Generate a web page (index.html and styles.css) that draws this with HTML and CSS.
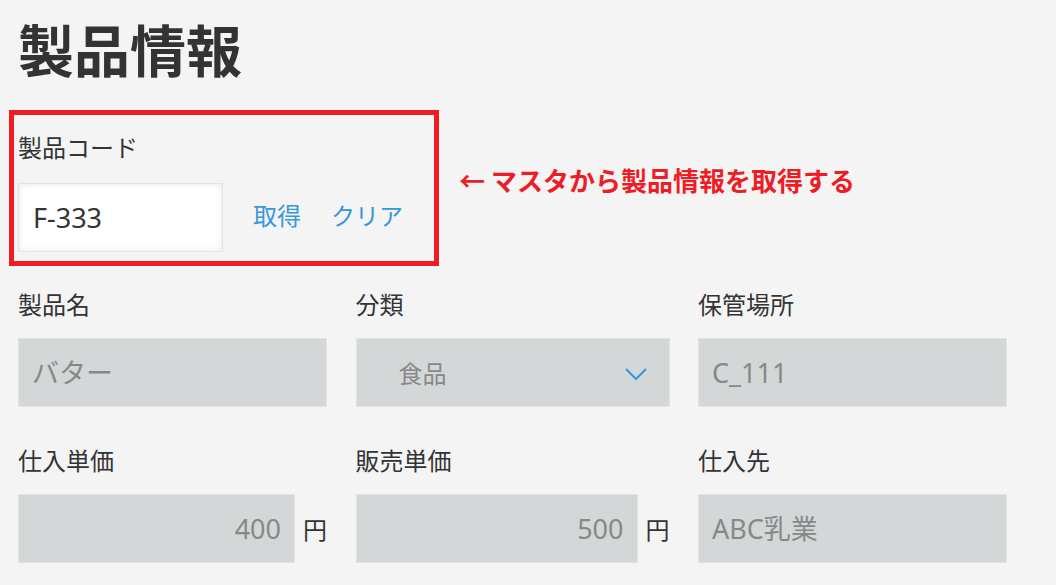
FILE: index.html
```html
<!DOCTYPE html>
<html lang="ja">
<head>
    <meta charset="UTF-8">
    <meta name="viewport" content="width=device-width, initial-scale=1.0">
    <title>製品情報</title>
    <link rel="stylesheet" href="styles.css">
</head>
<body>
    <div class="page">
        <h1 class="title">製品情報</h1>

        <!-- 製品コード（マスタ取得） -->
        <div class="code-row">
            <div class="code-box">
                <div class="label">製品コード</div>
                <div class="code-ctrl">
                    <div class="code-input">F-333</div>
                    <a class="link" href="#">取得</a>
                    <a class="link" href="#">クリア</a>
                </div>
            </div>
            <div class="note">← マスタから製品情報を取得する</div>
        </div>

        <!-- 取得後に埋まる項目 -->
        <div class="fields">
            <div class="field">
                <div class="label">製品名</div>
                <div class="ctrl">バター</div>
            </div>
            <div class="field">
                <div class="label">分類</div>
                <div class="ctrl select">
                    <span>食品</span>
                    <svg class="chevron" width="22" height="12" viewBox="0 0 22 12">
                        <polyline points="1,1 11,11 21,1" fill="none" stroke="#3498db" stroke-width="2"/>
                    </svg>
                </div>
            </div>
            <div class="field">
                <div class="label">保管場所</div>
                <div class="ctrl">C_111</div>
            </div>
            <div class="field">
                <div class="label">仕入単価</div>
                <div class="price">
                    <div class="ctrl num">400</div>
                    <span class="unit">円</span>
                </div>
            </div>
            <div class="field">
                <div class="label">販売単価</div>
                <div class="price">
                    <div class="ctrl num">500</div>
                    <span class="unit">円</span>
                </div>
            </div>
            <div class="field">
                <div class="label">仕入先</div>
                <div class="ctrl">ABC乳業</div>
            </div>
        </div>
    </div>
</body>
</html>
```

FILE: styles.css
```css
body {
    margin: 0;
    background: #f4f4f4;
    font-family: "Noto Sans", "Noto Sans CJK JP", sans-serif;
    color: #333;
}
.page {
    padding: 14px 18px 0 18px;
}
.title {
    margin: 0;
    font-size: 56px;
    line-height: 68px;
    font-weight: 700;
    font-family: "Noto Sans CJK JP", sans-serif;
    color: #333;
}
.label {
    font-size: 24px;
    line-height: 32px;
    font-family: "Noto Sans CJK JP", sans-serif;
    color: #333;
}
.code-row {
    display: flex;
    align-items: flex-start;
    margin-top: 28px;
}
.code-box {
    width: 430px;
    box-sizing: border-box;
    margin-left: -9px;
    padding: 16px 0 9px 4px;
    border: 5px solid #ee1c25;
}
.code-ctrl {
    display: flex;
    align-items: center;
    gap: 30px;
    margin-top: 20px;
}
.code-input {
    width: 205px;
    height: 69px;
    box-sizing: border-box;
    padding-left: 14px;
    background: #fff;
    border: 1px solid #e3e3e3;
    box-shadow: inset 0 0 6px #e6e6e6;
    font-size: 27px;
    line-height: 67px;
    color: #333;
}
.link {
    font-size: 24px;
    font-family: "Noto Sans CJK JP", sans-serif;
    color: #3498db;
    text-decoration: none;
    margin-top: -6px;
}
.note {
    margin: 54px 0 0 20px;
    font-size: 26px;
    line-height: 32px;
    font-weight: 700;
    font-family: "Noto Sans CJK JP", sans-serif;
    color: #ee1c25;
}
.fields {
    display: grid;
    grid-template-columns: 309px 314px 309px;
    column-gap: 28.5px;
    row-gap: 37px;
    margin-top: 22px;
}
.ctrl {
    height: 69px;
    box-sizing: border-box;
    margin-top: 18px;
    padding: 0 13px;
    background: #d4d7d8;
    border: 1px solid #e2e4e4;
    font-size: 27px;
    line-height: 67px;
    color: #888;
}
.select {
    display: flex;
    align-items: center;
    justify-content: space-between;
    padding: 0 22px 0 42px;
}
.select span {
    font-size: 24px;
    font-family: "Noto Sans CJK JP", sans-serif;
}
.chevron {
    display: block;
    margin-top: 2px;
}
.price {
    display: flex;
    align-items: center;
    margin-top: 18px;
}
.price .ctrl {
    flex: 1;
    margin-top: 0;
}
.num {
    text-align: right;
}
.unit {
    width: 24px;
    margin-left: 8px;
    font-size: 24px;
    font-family: "Noto Sans CJK JP", sans-serif;
    color: #333;
}
```
